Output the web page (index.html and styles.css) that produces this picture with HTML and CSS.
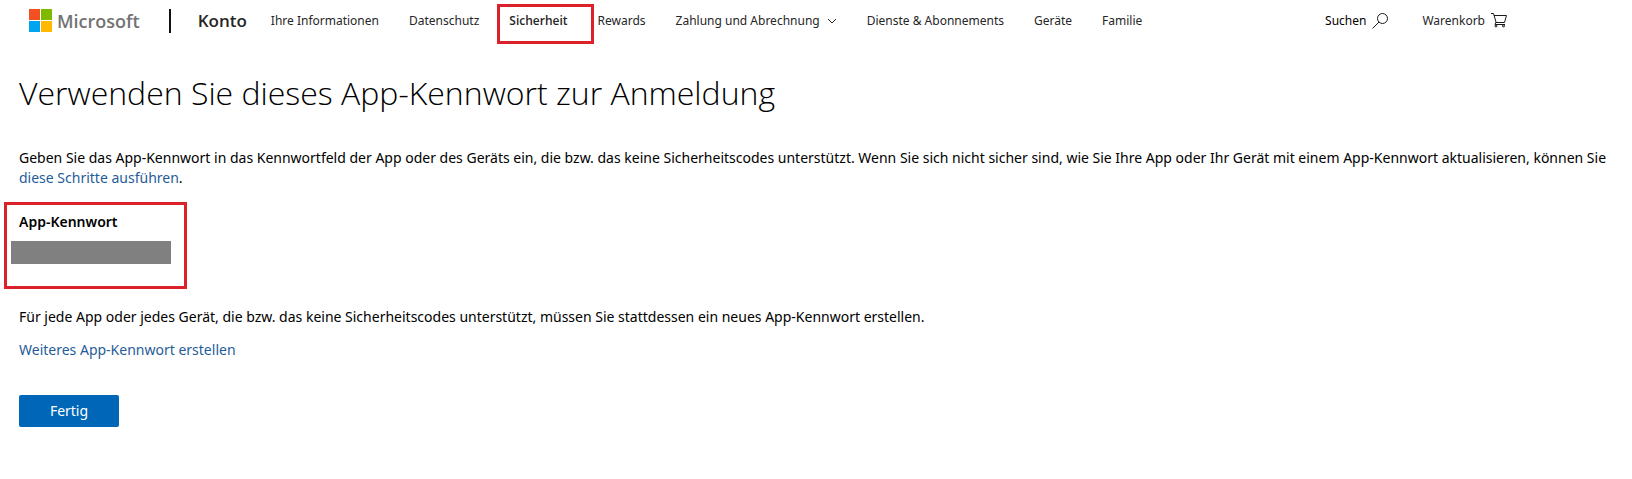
FILE: index.html
```html
<!DOCTYPE html>
<html lang="de">
<head>
<meta charset="utf-8">
<meta name="viewport" content="width=device-width, initial-scale=1">
<title>Microsoft-Konto | App-Kennwort</title>
<link rel="stylesheet" href="styles.css">
</head>
<body>
<header class="header">
  <a class="logo" href="#">
    <svg class="logo-mark" viewBox="0 0 23 23" aria-hidden="true">
      <path fill="#f25022" d="M0 0h11v11H0z"/>
      <path fill="#7fba00" d="M12 0h11v11H12z"/>
      <path fill="#00a4ef" d="M0 12h11v11H0z"/>
      <path fill="#ffb900" d="M12 12h11v11H12z"/>
    </svg>
    <span class="logo-name">Microsoft</span>
  </a>
  <span class="divider"></span>
  <a class="product" href="#">Konto</a>
  <nav class="nav">
    <a class="nav-link" href="#">Ihre Informationen</a>
    <a class="nav-link" href="#">Datenschutz</a>
    <a class="nav-link nav-link-active" href="#" aria-current="page">Sicherheit</a>
    <a class="nav-link" href="#">Rewards</a>
    <button class="nav-link nav-menu" type="button">Zahlung und Abrechnung
      <svg class="chevron" viewBox="0 0 10 6" aria-hidden="true"><path d="M1 1l4 4 4-4"/></svg>
    </button>
    <a class="nav-link" href="#">Dienste &amp; Abonnements</a>
    <a class="nav-link" href="#">Geräte</a>
    <a class="nav-link" href="#">Familie</a>
  </nav>
  <div class="tools">
    <button class="tool tool-search" type="button">Suchen
      <svg class="icon" viewBox="0 0 16 16" aria-hidden="true"><circle cx="10.5" cy="5.5" r="5"/><path d="M7 9L.5 15.500"/></svg>
    </button>
    <a class="tool" href="#">Warenkorb
      <svg class="icon" viewBox="0 0 16 16" aria-hidden="true"><path d="M0 .5h2.500l2.500 8.500-1 2.500h10M3 2.500h12.500l-2 7H5"/><circle cx="5" cy="13" r="1"/><circle cx="12.500" cy="13" r="1"/></svg>
    </a>
  </div>
</header>
<main class="main">
  <h1 class="title">Verwenden Sie dieses App-Kennwort zur Anmeldung</h1>
  <p class="text">Geben Sie das App-Kennwort in das Kennwortfeld der App oder des Geräts ein, die bzw. das keine Sicherheitscodes unterstützt. Wenn Sie sich nicht sicher sind, wie Sie Ihre App oder Ihr Gerät mit einem App-Kennwort aktualisieren, können Sie <a class="link" href="#">diese Schritte ausführen</a>.</p>
  <section class="password">
    <h2 class="password-label">App-Kennwort</h2>
    <div class="password-value"></div>
  </section>
  <p class="text">Für jede App oder jedes Gerät, die bzw. das keine Sicherheitscodes unterstützt, müssen Sie stattdessen ein neues App-Kennwort erstellen.</p>
  <p class="text text-action"><a class="link" href="#">Weiteres App-Kennwort erstellen</a></p>
  <button class="done" type="button">Fertig</button>
</main>
</body>
</html>
```
FILE: styles.css
```css
* {
  box-sizing: border-box;
}

body {
  margin: 0;
  background: #fff;
  color: #000;
  font: 14px/20px "Noto Sans", "Open Sans", sans-serif;
}

a {
  color: inherit;
  text-decoration: none;
}

button {
  padding: 0;
  border: 0;
  background: none;
  color: inherit;
  font: inherit;
  cursor: pointer;
}

.header {
  display: flex;
  align-items: center;
  height: 41px;
  padding: 0 125px 0 29px;
  color: #262626;
  font-size: 12px;
  white-space: nowrap;
}

.logo {
  display: flex;
  align-items: center;
  gap: 5px;
}

.logo-mark {
  width: 23px;
  height: 23px;
}

.logo-name {
  color: #737373;
  font-family: "Open Sans", sans-serif;
  font-size: 18px;
  font-weight: 600;
}

.divider {
  width: 2px;
  height: 24px;
  margin: 0 27px 0 29px;
  background: #111;
}

.product {
  margin-right: 24px;
  font-family: "Open Sans", sans-serif;
  font-size: 17px;
  font-weight: 600;
}

.nav {
  display: flex;
  align-items: center;
  gap: 30px;
}

.nav-link-active {
  position: relative;
  font-family: "Open Sans", sans-serif;
  font-weight: 600;
}

.nav-link-active::after {
  content: "";
  position: absolute;
  inset: -7px -26px -13px -12px;
  border: 3px solid #db2129;
}

.nav-menu {
  display: flex;
  align-items: center;
  gap: 7px;
}

.chevron {
  width: 10px;
  height: 6px;
  fill: none;
  stroke: #262626;
}

.tools {
  display: flex;
  gap: 34px;
  margin-left: auto;
}

.tool {
  display: flex;
  align-items: center;
  gap: 6px;
}

.tool-search {
  color: #000;
}

.icon {
  width: 16px;
  height: 16px;
  fill: none;
  stroke: #1a1a1a;
}

.main {
  padding: 28px 12px 0 19px;
}

.title {
  margin: 0 0 31px;
  font-family: "Open Sans", sans-serif;
  font-size: 32px;
  font-weight: 300;
  line-height: 48px;
}

.text {
  margin: 0;
}

.link {
  color: #1f5c99;
}

.password {
  width: 183px;
  margin: 14px 0 18px -15px;
  padding: 7px 4px 22px;
  border: 3px solid #db2129;
}

.password-label {
  margin: 0 0 9px 8px;
  font-size: 14px;
  font-weight: 600;
}

.password-value {
  width: 160px;
  height: 23px;
  background: #808080;
}

.text-action {
  margin-top: 13px;
}

.done {
  width: 100px;
  height: 32px;
  margin-top: 35px;
  border-radius: 2px;
  background: #0067b8;
  color: #fff;
}
```
